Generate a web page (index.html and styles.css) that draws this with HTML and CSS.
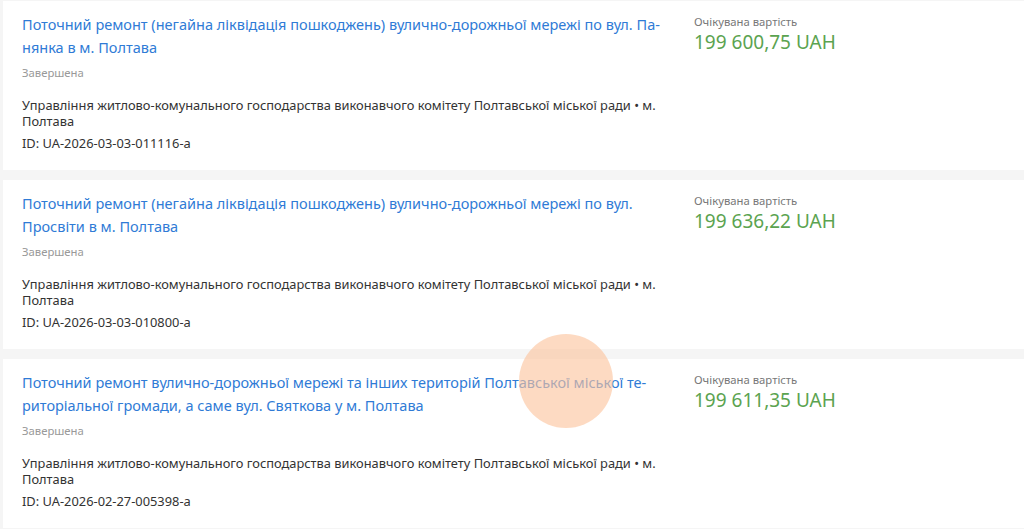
FILE: index.html
```html
<!DOCTYPE html>
<html lang="uk">
<head>
<meta charset="utf-8">
<link rel="stylesheet" href="styles.css">
</head>
<body>
<div class="list">
  <div class="card">
    <div class="main">
      <a class="title" href="#">Поточний ремонт (негайна ліквідація пошкоджень) вулично-дорожньої мережі по вул. Па-<br>нянка в м. Полтава</a>
      <div class="status">Завершена</div>
      <div class="org">Управління житлово-комунального господарства виконавчого комітету Полтавської міської ради • м.<br>Полтава</div>
      <div class="id">ID: UA-2026-03-03-011116-a</div>
    </div>
    <div class="side">
      <div class="label">Очікувана вартість</div>
      <div class="price">199 600,75 UAH</div>
    </div>
  </div>
  <div class="card">
    <div class="main">
      <a class="title" href="#">Поточний ремонт (негайна ліквідація пошкоджень) вулично-дорожньої мережі по вул.<br>Просвіти в м. Полтава</a>
      <div class="status">Завершена</div>
      <div class="org">Управління житлово-комунального господарства виконавчого комітету Полтавської міської ради • м.<br>Полтава</div>
      <div class="id">ID: UA-2026-03-03-010800-a</div>
    </div>
    <div class="side">
      <div class="label">Очікувана вартість</div>
      <div class="price">199 636,22 UAH</div>
    </div>
  </div>
  <div class="card">
    <div class="main">
      <a class="title" href="#">Поточний ремонт вулично-дорожньої мережі та інших територій Полтавської міської те-<br>риторіальної громади, а саме вул. Святкова у м. Полтава</a>
      <div class="status">Завершена</div>
      <div class="org">Управління житлово-комунального господарства виконавчого комітету Полтавської міської ради • м.<br>Полтава</div>
      <div class="id">ID: UA-2026-02-27-005398-a</div>
    </div>
    <div class="side">
      <div class="label">Очікувана вартість</div>
      <div class="price">199 611,35 UAH</div>
    </div>
  </div>
</div>
<div class="click-dot"></div>
</body>
</html>
```

FILE: styles.css
```css
html, body {
  margin: 0;
  padding: 0;
  background: #f5f5f5;
  font-family: "Noto Sans", "Open Sans", sans-serif;
  overflow: hidden;
}
.list {
  display: flex;
  flex-direction: column;
  gap: 10px;
  padding: 1px 0 0 3px;
}
.card {
  background: #fff;
  height: 169px;
  flex-shrink: 0;
  box-sizing: border-box;
  display: flex;
  padding: 12px 0 0 19px;
}
.main {
  width: 645px;
  flex-shrink: 0;
  display: flex;
  flex-direction: column;
  align-items: flex-start;
}
.title {
  font-size: 14.5px;
  line-height: 23px;
  color: #2f7bd6;
  text-decoration: none;
  white-space: nowrap;
}
.status {
  margin-top: 6px;
  font-size: 11.3px;
  line-height: 16px;
  color: #999;
}
.org {
  margin-top: 16px;
  font-size: 12.85px;
  line-height: 16px;
  color: #333;
  white-space: nowrap;
}
.id {
  margin-top: 6px;
  font-size: 12.85px;
  line-height: 17px;
  color: #333;
}
.side {
  margin-left: 27px;
  padding-top: 1px;
}
.label {
  font-size: 11.3px;
  line-height: 16px;
  color: #777;
}
.price {
  margin-top: 0;
  font-size: 19px;
  line-height: 25px;
  color: #5ba350;
}
.click-dot {
  position: absolute;
  left: 519px;
  top: 334px;
  width: 94px;
  height: 94px;
  border-radius: 50%;
  background: rgba(252, 196, 156, 0.62);
}
```
